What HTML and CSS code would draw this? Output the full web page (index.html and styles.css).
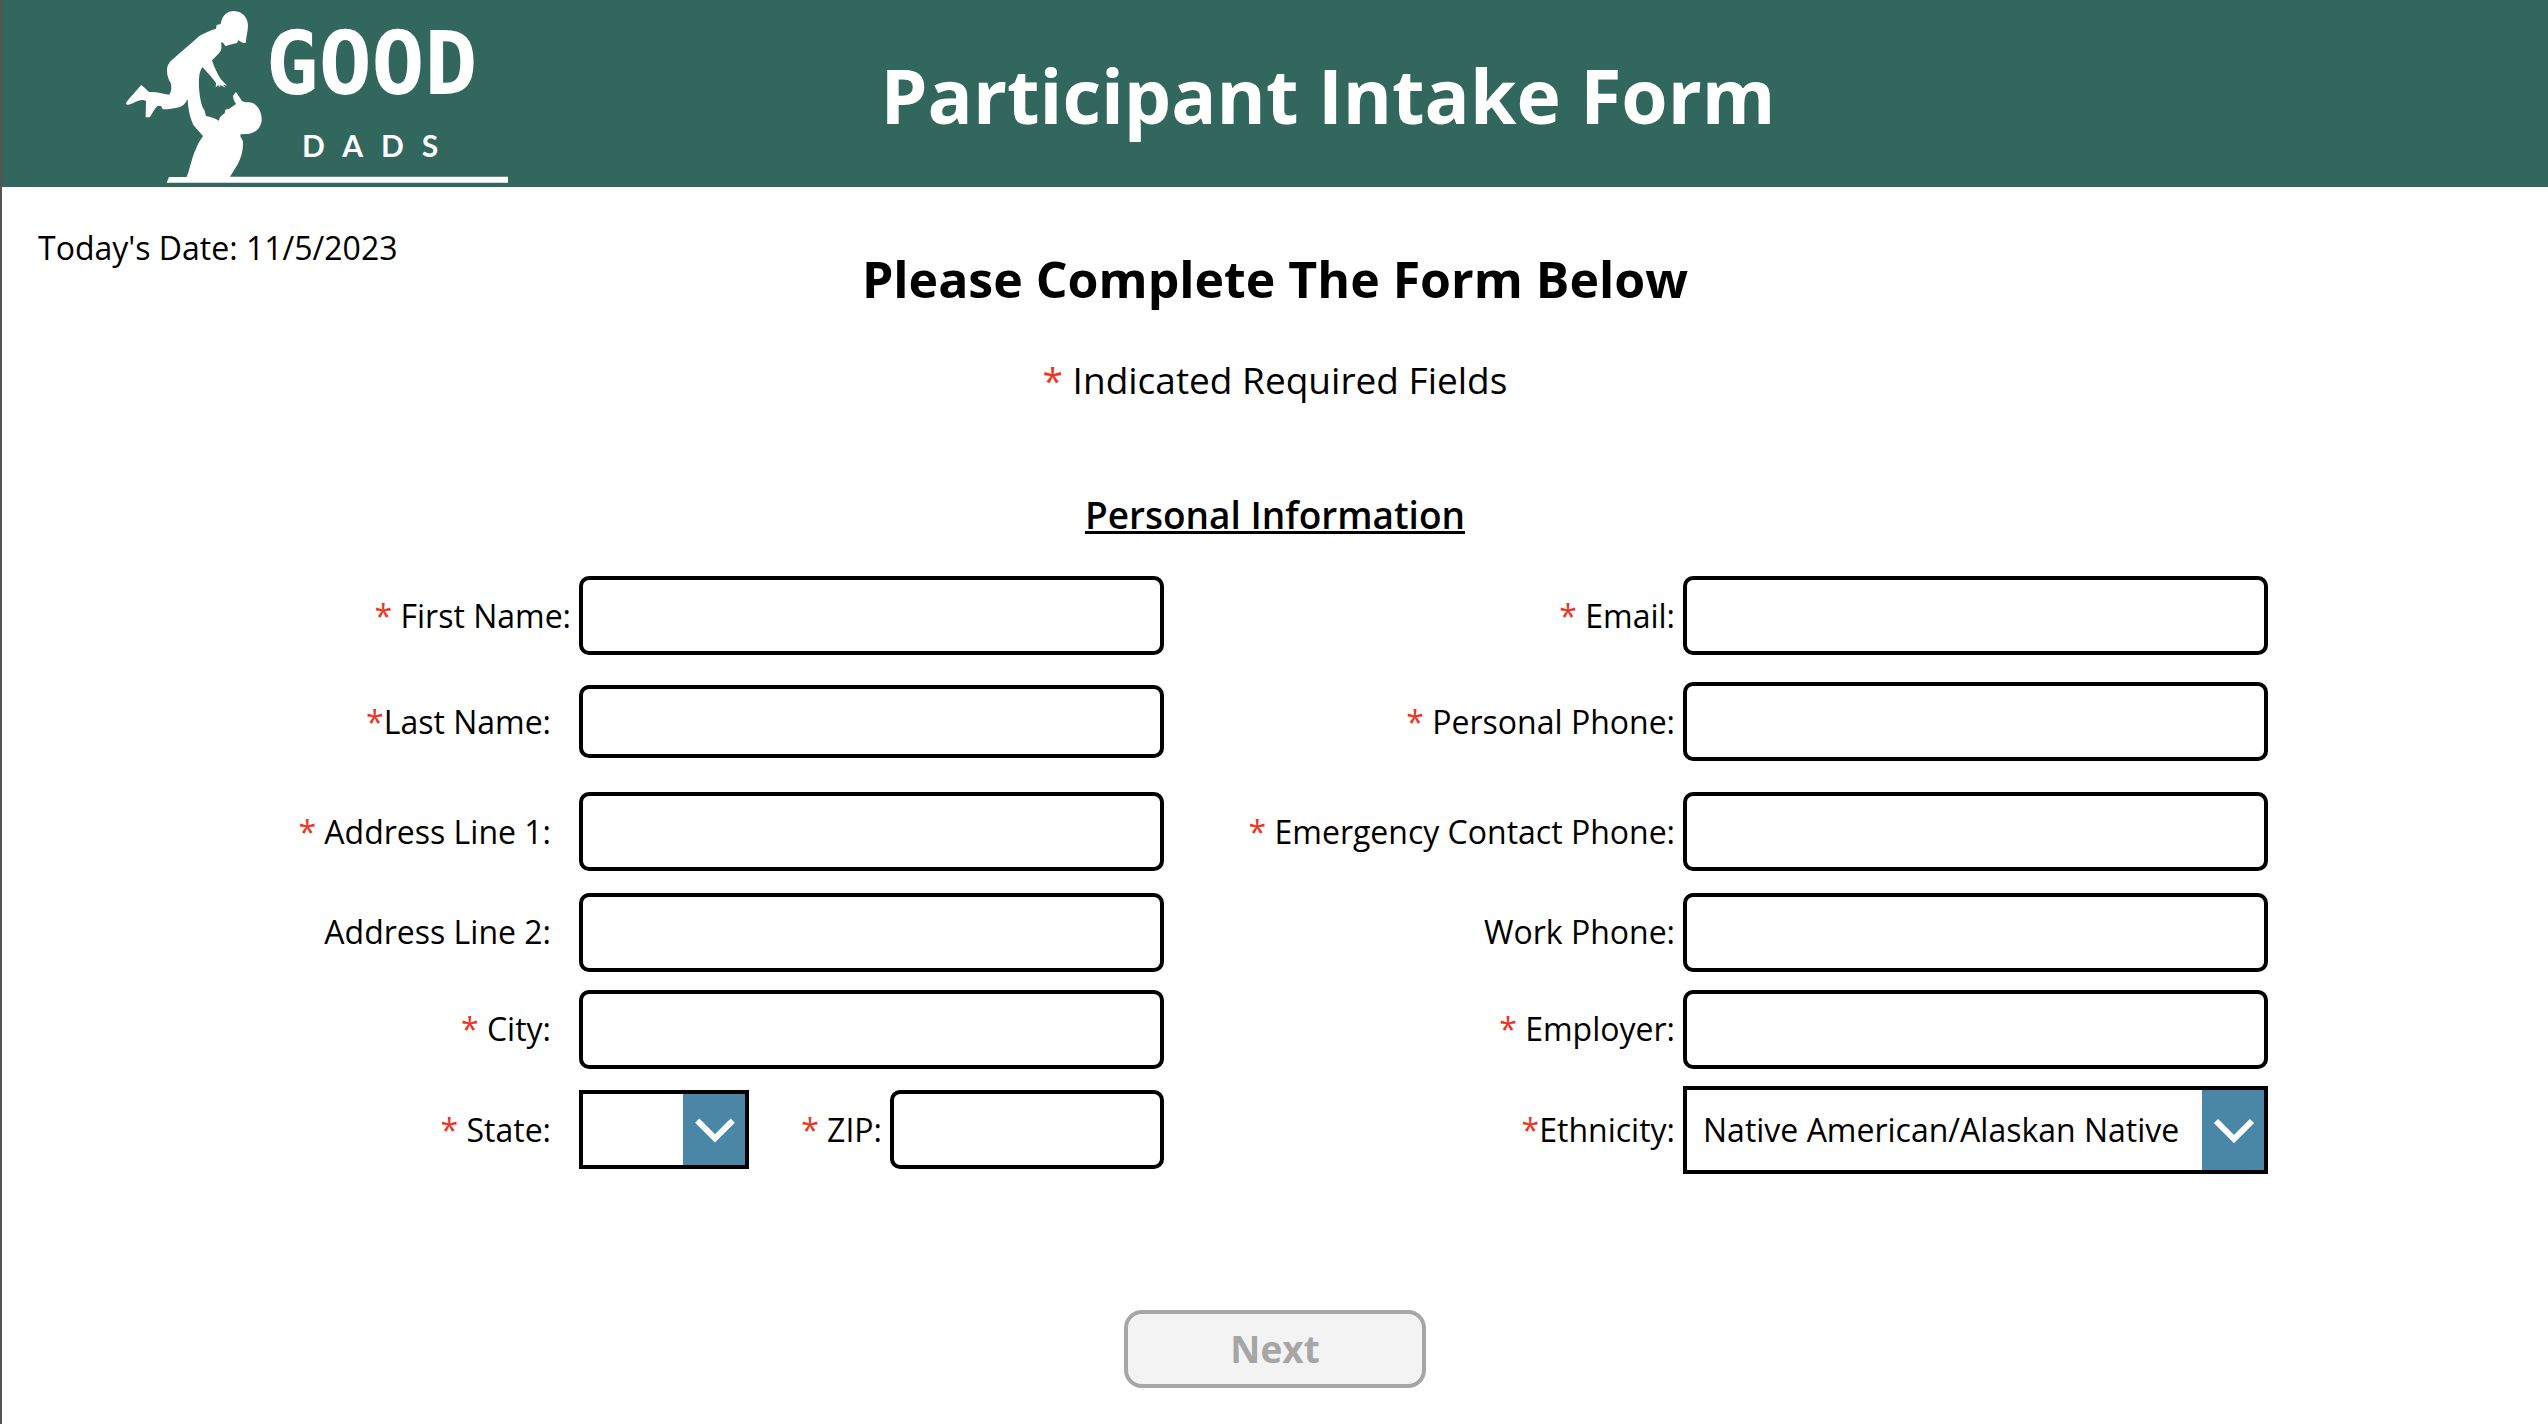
FILE: index.html
```
<!DOCTYPE html>
<html lang="en">
<head>
<meta charset="utf-8">
<meta name="viewport" content="width=device-width, initial-scale=1">
<title>Participant Intake Form</title>
<link rel="stylesheet" href="styles.css">
</head>
<body>
<header class="banner">
  <svg class="logo" viewBox="24 0 1266 561" role="img" aria-label="Good Dads">
    <path d="M362 72C366 46 382 33 402 33C428 34 444 54 444 78C443 96 439 110 437 129L429 129L415 121L411 129C398 132 386 134 377 139L369 128L363 127C366 145 364 152 357 160L336 181C342 200 352 222 362 237L381 257L369 254L377 263L361 255L358 262L354 254L347 263L348 249C338 236 322 217 308 202C298 210 296 235 297 262C299 290 303 318 313 330L318 348C332 350 344 355 357 362C358 352 363 347 374 340L376 329C384 327 388 327 392 323L408 312C400 300 398 290 400 286L408 276L426 303C432 308 444 306 456 308C474 315 486 335 485 362C482 385 464 402 440 402L422 403L421 409L429 424C430 450 424 470 414 491L390 530L1224 530L1224 548L200 548L207 531L260 531C270 505 276 470 288 446C294 430 302 418 309 408L280 375C270 350 265 335 263 298C256 310 250 318 240 321C222 325 204 328 188 328L183 318L172 318C162 329 156 342 149 352L137 352L138 303C128 296 112 302 98 310C90 314 82 316 77 312C82 300 98 285 108 273L124 254L147 276C168 274 188 281 207 284C214 276 216 262 212 248C204 235 201 226 201 206C203 192 210 184 220 176C248 152 272 132 298 108C314 98 334 90 348 86L350 75Z"/>
    <text class="logo-name" x="497" y="282">GOOD</text>
    <text class="logo-sub" x="606" y="472">DADS</text>
  </svg>
  <h1 class="banner-title">Participant Intake Form</h1>
</header>

<main>
  <section class="intro">
    <p class="date">Today's Date: 11/5/2023</p>
    <h2 class="heading">Please Complete The Form Below</h2>
    <p class="hint"><span class="req">*</span> Indicated Required Fields</p>
    <h3 class="group-title">Personal Information</h3>
  </section>

  <form>
    <div class="fields">
      <label class="label" for="first-name"><span class="req">*</span> First Name:</label>
      <input class="box" id="first-name" type="text">
      <label class="label" for="email"><span class="req">*</span> Email:</label>
      <input class="box" id="email" type="email">

      <label class="label label-wide" for="last-name"><span class="req">*</span>Last Name:</label>
      <input class="box box-short" id="last-name" type="text">
      <label class="label" for="personal-phone"><span class="req">*</span> Personal Phone:</label>
      <input class="box" id="personal-phone" type="tel">

      <label class="label label-wide" for="address-1"><span class="req">*</span> Address Line 1:</label>
      <input class="box" id="address-1" type="text">
      <label class="label" for="emergency-phone"><span class="req">*</span> Emergency Contact Phone:</label>
      <input class="box" id="emergency-phone" type="tel">

      <label class="label label-wide" for="address-2">Address Line 2:</label>
      <input class="box" id="address-2" type="text">
      <label class="label" for="work-phone">Work Phone:</label>
      <input class="box" id="work-phone" type="tel">

      <label class="label label-wide" for="city"><span class="req">*</span> City:</label>
      <input class="box" id="city" type="text">
      <label class="label" for="employer"><span class="req">*</span> Employer:</label>
      <input class="box" id="employer" type="text">

      <label class="label label-wide" for="state"><span class="req">*</span> State:</label>
      <div class="split">
        <span class="picker picker-state">
          <select class="select" id="state"><option></option><option>MO</option></select>
          <svg class="arrow" viewBox="0 0 62 72" aria-hidden="true"><path d="M14 27L32 45L50 27"/></svg>
        </span>
        <label class="label" for="zip"><span class="req">*</span> ZIP:</label>
        <input class="box box-zip" id="zip" type="text">
      </div>
      <label class="label" for="ethnicity"><span class="req">*</span>Ethnicity:</label>
      <span class="picker picker-tall">
        <select class="select" id="ethnicity"><option>Native American/Alaskan Native</option></select>
        <svg class="arrow" viewBox="0 0 62 72" aria-hidden="true"><path d="M14 27L32 45L50 27"/></svg>
      </span>
    </div>
    <button class="next" type="submit" disabled>Next</button>
  </form>
</main>
</body>
</html>
```
FILE: styles.css
```
* { box-sizing: border-box; }

body {
  margin: 0;
  min-height: 100vh;
  border-left: 2px solid #555;
  background: #fff;
  color: #000;
  font: 32px/44px "Open Sans", "Noto Sans", sans-serif;
}

h1, h2, h3, p { margin: 0; }

.banner {
  display: grid;
  align-items: center;
  padding-left: 106px;
  background: #31675d;
  color: #fff;
}

.logo {
  grid-area: 1 / 1;
  display: block;
  width: 422px;
  height: 187px;
  fill: #fff;
}

.logo-name { font: bold 264px "DejaVu Sans Mono", monospace; }
.logo-sub { font: bold 90px Lato, sans-serif; letter-spacing: 54px; }

.banner-title {
  grid-area: 1 / 1;
  justify-self: center;
  padding-top: 2px;
  font-size: 75px;
  line-height: 100px;
}

.intro {
  display: flex;
  flex-direction: column;
  align-items: center;
  padding-top: 39px;
}

.date {
  align-self: flex-start;
  padding-left: 36px;
}

.heading {
  margin-top: -25px;
  font-size: 50px;
  line-height: 68px;
}

.hint {
  margin-top: 42px;
  font-size: 37px;
  line-height: 50px;
}

.group-title {
  margin-top: 85px;
  font-size: 37px;
  font-weight: 600;
  line-height: 50px;
  text-decoration: underline;
}

.req { color: #ee3524; }

.fields {
  display: grid;
  grid-template-columns: 577fr 585fr 519fr 585fr 280fr;
  grid-template-rows: 107px 105px 115px 86px 108px 93px;
  align-items: center;
  margin-top: 22px;
}

.label {
  padding-right: 8px;
  text-align: right;
  white-space: nowrap;
}

.label-wide { padding-right: 28px; }

.fields > .label-wide, .fields > .label:first-child { grid-column: 1; }

.box {
  width: 100%;
  height: 79px;
  padding: 0 18px;
  border: 4px solid #000;
  border-radius: 10px;
  background: #fff;
  font: inherit;
}

.box-short { height: 73px; }

.split {
  display: flex;
  align-items: center;
}

.split .label { margin-left: auto; }

.box-zip { width: 274px; }

.picker {
  display: grid;
  height: 79px;
}

.picker-state { width: 170px; }
.picker-tall { height: 88px; }

.select {
  grid-area: 1 / 1;
  width: 100%;
  padding: 0 62px 0 16px;
  border: 4px solid #000;
  border-radius: 0;
  background: #fff;
  color: #000;
  font: inherit;
  appearance: none;
}

.arrow {
  grid-area: 1 / 1;
  justify-self: end;
  width: 62px;
  height: calc(100% - 8px);
  margin: 4px;
  background: #4a87a7;
  fill: none;
  stroke: #fff;
  stroke-width: 6;
  pointer-events: none;
}

.next {
  display: block;
  width: 302px;
  height: 78px;
  margin: 134px auto 34px;
  border: 4px solid #a6a6a6;
  border-radius: 18px;
  background: #f3f3f3;
  color: #a6a6a6;
  font: bold 37px/50px "Open Sans", "Noto Sans", sans-serif;
}
```
